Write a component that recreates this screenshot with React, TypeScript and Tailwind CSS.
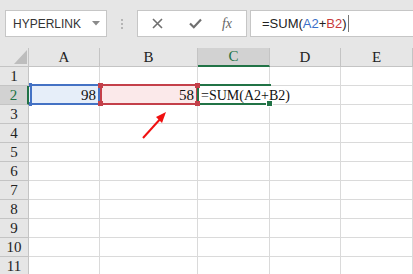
import React from "react";

const COLS = ["A", "B", "C", "D", "E"];
const ROWS = [1, 2, 3, 4, 5, 6, 7, 8, 9, 10, 11];

const song = { fontFamily: '"Liberation Serif", "DejaVu Serif", serif' };

function Toolbar() {
  return (
    <div className="h-[48px] bg-[#e6e6e6] flex items-start pt-[10px] pl-[5px] overflow-hidden">
      {/* Name box */}
      <div className="w-[102px] h-[27px] shrink-0 bg-white border border-[#c6c6c6] flex items-center justify-between pl-[7px] pr-[6px]">
        <span className="text-[12px] text-[#333]">HYPERLINK</span>
        <svg width="8" height="5" viewBox="0 0 8 5">
          <path d="M0 0 L8 0 L4 4.5 Z" fill="#8a8a8a" />
        </svg>
      </div>

      {/* Grip dots */}
      <div className="w-[30px] h-[27px] shrink-0 flex flex-col items-center justify-center gap-[2px]">
        <span className="w-[2px] h-[2px] bg-[#b5b5b5]" />
        <span className="w-[2px] h-[2px] bg-[#b5b5b5]" />
        <span className="w-[2px] h-[2px] bg-[#b5b5b5]" />
      </div>

      {/* Cancel / enter / fx */}
      <div className="w-[110px] h-[27px] shrink-0 bg-white border border-[#c6c6c6] flex items-center">
        <div className="w-[38px] flex justify-center pl-[1px]">
          <svg width="11" height="11" viewBox="0 0 11 11">
            <path d="M1 1 L10 10 M10 1 L1 10" stroke="#6f6f6f" strokeWidth="1.6" />
          </svg>
        </div>
        <div className="w-[38px] flex justify-center">
          <svg width="13" height="11" viewBox="0 0 13 11">
            <path d="M1 5.5 L4.8 9.2 L12 1.5" stroke="#6f6f6f" strokeWidth="2.2" fill="none" />
          </svg>
        </div>
        <div className="flex-1 flex justify-center pr-[6px]">
          <span className="italic text-[14px] text-[#666] leading-none" style={song}>
            fx
          </span>
        </div>
      </div>

      {/* Formula input */}
      <div className="ml-[3px] w-[200px] h-[27px] shrink-0 bg-white border border-[#c6c6c6] flex items-center pl-[11px]">
        <span className="text-[13px] text-[#222]">
          =SUM(<span className="text-[#3a6fc8]">A2</span>+<span className="text-[#c83a3a]">B2</span>)
        </span>
        <span className="ml-px w-px h-[17px] bg-[#777]" />
      </div>
    </div>
  );
}

function Sheet() {
  return (
    <div className="relative">
      <div className="grid grid-cols-[29px_71px_98px_72px_71px_72px] auto-rows-[19px]" style={song}>
        {/* header row */}
        <div className="bg-[#e6e6e6] border-r border-b border-[#c4c4c4] relative">
          <svg className="absolute left-[14px] top-[2px]" width="13" height="14" viewBox="0 0 13 14">
            <path d="M13 0 L13 14 L0 14 Z" fill="#bdbdbd" />
          </svg>
        </div>
        {COLS.map((c) => (
          <div
            key={c}
            className={
              c === "C"
                ? "bg-[#d2d2d2] border-r border-[#c4c4c4] border-b-2 border-b-[#217346] flex items-center justify-center text-[15px] text-[#217346]"
                : "bg-[#e6e6e6] border-r border-b border-[#c4c4c4] flex items-center justify-center text-[15px] text-[#222]"
            }
          >
            {c}
          </div>
        ))}

        {ROWS.map((r) => (
          <React.Fragment key={r}>
            <div
              className={
                r === 2
                  ? "bg-[#d2d2d2] border-r-2 border-r-[#217346] border-b border-[#c4c4c4] flex items-center justify-center text-[15px] text-[#217346]"
                  : "bg-[#e6e6e6] border-r border-b border-[#c4c4c4] flex items-center justify-center text-[15px] text-[#222]"
              }
            >
              {r}
            </div>
            {r === 2 ? (
              <>
                <div className="bg-[#e6eef9] border-r border-b border-[#dadada] flex items-center justify-end pr-[3px] text-[15px] text-[#111]">
                  98
                </div>
                <div className="bg-[#fbe9ea] border-r border-b border-[#dadada] flex items-center justify-end pr-[3px] text-[15px] text-[#111]">
                  58
                </div>
                <div className="border-b border-[#dadada] flex items-center pl-[3px] text-[14px] text-[#111] whitespace-nowrap overflow-visible">
                  =SUM(A2+B2)
                </div>
                <div className="border-r border-b border-[#dadada]" />
                <div className="border-r border-b border-[#dadada]" />
              </>
            ) : (
              COLS.map((c) => <div key={c} className="border-r border-b border-[#dadada]" />)
            )}
          </React.Fragment>
        ))}
      </div>

      {/* reference ranges and active cell */}
      <div className="absolute left-[30px] top-[36px] w-[70px] h-[21px] border-2 border-[#4472c4] pointer-events-none" />
      <span className="absolute left-[29px] top-[35px] w-[3px] h-[4px] bg-[#4472c4]" />
      <span className="absolute left-[29px] top-[54px] w-[3px] h-[4px] bg-[#4472c4]" />

      <div className="absolute left-[100px] top-[36px] w-[98px] h-[21px] border-2 border-[#c4404a] pointer-events-none" />
      <span className="absolute left-[98px] top-[35px] w-[5px] h-[5px] bg-[#c4404a]" />
      <span className="absolute left-[98px] top-[53px] w-[5px] h-[5px] bg-[#c4404a]" />
      <span className="absolute left-[195px] top-[35px] w-[5px] h-[5px] bg-[#c4404a]" />
      <span className="absolute left-[195px] top-[53px] w-[5px] h-[5px] bg-[#c4404a]" />

      <span className="absolute left-[200px] top-[36px] w-[71px] h-[2px] bg-[#217346]" />
      <span className="absolute left-[200px] top-[55px] w-[67px] h-[2px] bg-[#217346]" />
      <span className="absolute left-[197px] top-[40px] w-[2px] h-[13px] bg-[#217346]" />
      <span className="absolute left-[267px] top-[53px] w-[5px] h-[5px] bg-[#217346] border border-white box-content -ml-px -mt-px" />

      {/* red arrow */}
      <svg className="absolute left-[138px] top-[60px]" width="34" height="34" viewBox="0 0 34 34">
        <path d="M5 30 L24 9" stroke="#f01010" strokeWidth="2" />
        <path d="M28 4 L18 9 L24 15 Z" fill="#f01010" />
      </svg>
    </div>
  );
}

export default function App() {
  return (
    <div
      className="w-[413px] h-[274px] overflow-hidden bg-white"
      style={{ fontFamily: '"Liberation Sans", Arial, sans-serif' }}
    >
      <Toolbar />
      <Sheet />
    </div>
  );
}
